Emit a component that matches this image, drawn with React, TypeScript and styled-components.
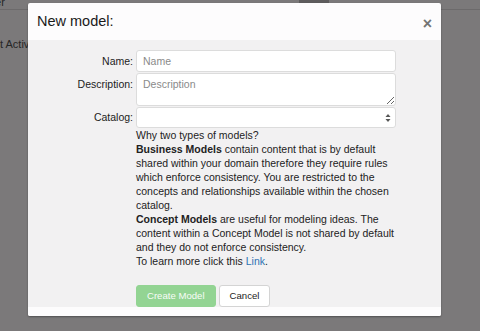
import React from "react";
import styled, { createGlobalStyle } from "styled-components";

const Global = createGlobalStyle`
  html, body { margin: 0; padding: 0; }
  body {
    width: 480px;
    height: 331px;
    overflow: hidden;
    background: #7b797a;
    font-family: "Liberation Sans", Arial, Helvetica, sans-serif;
  }
  #root { height: 331px; }
`;

const Page = styled.div`
  position: relative;
  width: 480px;
  height: 331px;
  background: #7b797a;
  overflow: hidden;
`;

const TopBar = styled.div`
  height: 9px;
  border-bottom: 1px solid #6c6a6b;
  display: flex;
  align-items: flex-end;
  overflow: hidden;
  position: relative;
`;

const TopLeftText = styled.span`
  font-size: 11px;
  line-height: 11px;
  color: #262626;
  margin-left: -8px;
  margin-bottom: 1px;
`;

const SearchGroup = styled.div`
  margin-left: auto;
  margin-right: 58px;
  display: flex;
  align-items: flex-start;
  align-self: flex-start;
  height: 9px;
`;

const SearchBtn = styled.div`
  width: 30px;
  height: 3px;
  background: #5e5c5d;
`;

const SearchLabel = styled.span`
  margin-left: 6px;
  margin-top: -9px;
  font-size: 11px;
  line-height: 11px;
  color: #3a3a3a;
`;

const SideRow = styled.div`
  padding-top: 29px;
  font-size: 11px;
  line-height: 11px;
  color: #262626;
  margin-left: -5.5px;
`;

const Modal = styled.div`
  position: absolute;
  left: 28px;
  top: 3px;
  width: 413px;
  background: #fdfcfd;
  border-radius: 2px;
  box-shadow: 0 1px 2px rgba(0, 0, 0, 0.35);
  overflow: hidden;
`;

const Header = styled.div`
  height: 37px;
  display: flex;
  align-items: center;
  justify-content: space-between;
  padding: 0 9px;
  box-sizing: border-box;
`;

const Title = styled.h4`
  margin: 0;
  margin-top: -2px;
  font-size: 14.5px;
  font-weight: 400;
  color: #1a1a1a;
`;

const Close = styled.span`
  font-size: 16px;
  font-weight: 700;
  color: #747474;
  line-height: 1;
  margin-top: 5px;
`;

const Body = styled.div`
  background: #f2f1f2;
  padding: 10px 45px 0 0;
`;

const Form = styled.div`
  display: grid;
  grid-template-columns: 105px 260px;
  column-gap: 3px;
  row-gap: 1px;
  align-items: start;
`;

const Label = styled.label<{ $top: number }>`
  text-align: right;
  font-size: 10.5px;
  color: #1c1c1c;
  padding-top: ${(p) => p.$top}px;
`;

const Input = styled.input`
  box-sizing: border-box;
  width: 260px;
  height: 22px;
  border: 1px solid #dcdcdc;
  border-radius: 3px;
  background: #fff;
  padding: 0 6px;
  font-family: inherit;
  font-size: 10.5px;
  color: #333;
  outline: none;
  &::placeholder { color: #8a8a8a; }
`;

const TextArea = styled.textarea`
  box-sizing: border-box;
  width: 260px;
  height: 33px;
  border: 1px solid #dcdcdc;
  border-radius: 3px;
  background: #fff;
  padding: 4px 6px;
  font-family: inherit;
  font-size: 10.5px;
  color: #333;
  outline: none;
  display: block;
  resize: vertical;
  &::placeholder { color: #8a8a8a; }
`;

const SelectBox = styled.div`
  box-sizing: border-box;
  width: 260px;
  height: 21px;
  border: 1px solid #dcdcdc;
  border-radius: 3px;
  background: #fff;
  display: flex;
  align-items: center;
  justify-content: flex-end;
  padding-right: 4px;
`;

const Help = styled.p`
  grid-column: 2;
  margin: 0;
  font-size: 10.5px;
  line-height: 13.95px;
  color: #222;
  white-space: nowrap;
`;

const Link = styled.a`
  color: #2f73b3;
  text-decoration: none;
`;

const Actions = styled.div`
  grid-column: 2;
  display: flex;
  gap: 3px;
  margin-top: 15px;
`;

const Button = styled.button<{ $variant: "primary" | "default" }>`
  box-sizing: border-box;
  height: 22px;
  padding: 0 10px;
  border-radius: 3px;
  font-family: inherit;
  font-size: 9.6px;
  cursor: pointer;
  border: 1px solid ${(p) => (p.$variant === "primary" ? "#93d493" : "#d4d4d4")};
  background: ${(p) => (p.$variant === "primary" ? "#93d493" : "#fff")};
  color: ${(p) => (p.$variant === "primary" ? "#f7fcf7" : "#222")};
`;

const Footer = styled.div`
  height: 9px;
  background: #fdfcfd;
`;

const SelectArrows = () => (
  <svg width="6" height="10" viewBox="0 0 6 10">
    <path d="M3 1 L5.5 4 H0.5 Z" fill="#555" />
    <path d="M3 9 L5.5 6 H0.5 Z" fill="#555" />
  </svg>
);

export default function App() {
  return (
    <>
      <Global />
      <Page>
        <TopBar>
          <TopLeftText>ter</TopLeftText>
          <SearchGroup>
            <SearchBtn />
            <SearchLabel>Advanced Search</SearchLabel>
          </SearchGroup>
        </TopBar>
        <SideRow>st Activity</SideRow>
        <Modal>
          <Header>
            <Title>New model:</Title>
            <Close>×</Close>
          </Header>
          <Body>
            <Form>
              <Label $top={5}>Name:</Label>
              <Input placeholder="Name" />
              <Label $top={5}>Description:</Label>
              <TextArea placeholder="Description" />
              <Label $top={4}>Catalog:</Label>
              <SelectBox>
                <SelectArrows />
              </SelectBox>
              <Help>
                Why two types of models?
                <br />
                <b>Business Models</b> contain content that is by default
                <br />
                shared within your domain therefore they require rules
                <br />
                which enforce consistency. You are restricted to the
                <br />
                concepts and relationships available within the chosen
                <br />
                catalog.
                <br />
                <b>Concept Models</b> are useful for modeling ideas. The
                <br />
                content within a Concept Model is not shared by default
                <br />
                and they do not enforce consistency.
                <br />
                To learn more click this <Link href="#">Link</Link>.
              </Help>
              <Actions>
                <Button $variant="primary">Create Model</Button>
                <Button $variant="default">Cancel</Button>
              </Actions>
            </Form>
          </Body>
          <Footer />
        </Modal>
      </Page>
    </>
  );
}
